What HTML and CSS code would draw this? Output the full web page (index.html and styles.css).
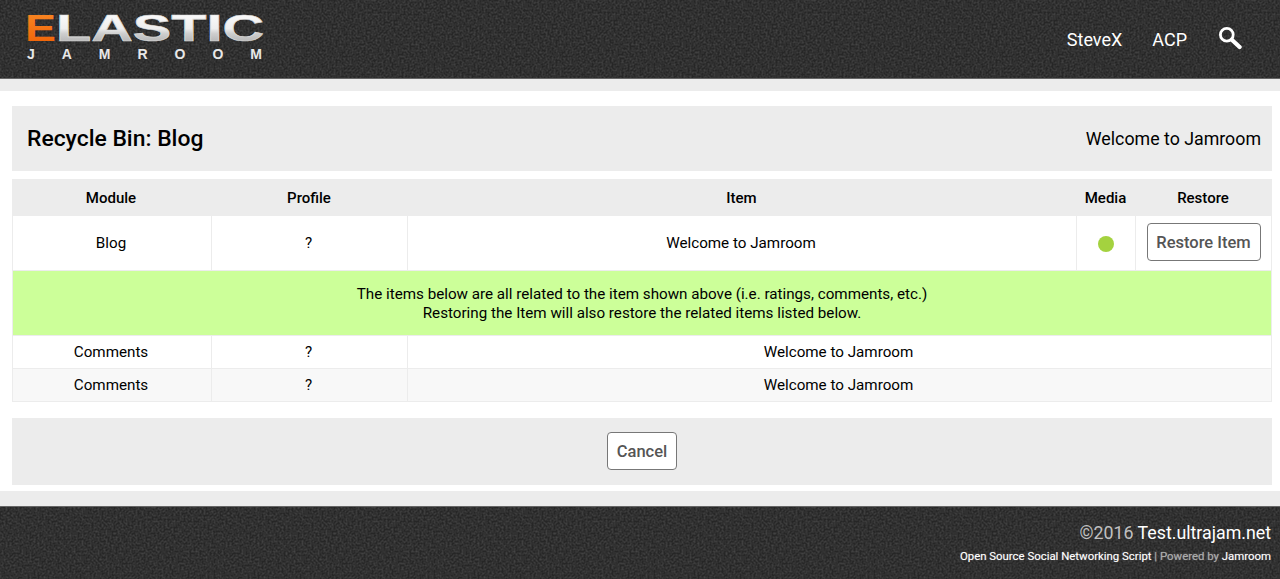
FILE: index.html
```html
<!DOCTYPE html>
<html lang="en">
<head>
<meta charset="utf-8">
<title>Recycle Bin: Blog</title>
<link rel="stylesheet" href="styles.css">
</head>
<body>
<header class="site-header">
  <a class="logo" href="#" aria-label="Elastic Jamroom">
    <svg class="logo-svg" width="250" height="56" viewBox="0 0 250 56">
      <defs>
        <linearGradient id="metal" x1="0" y1="0" x2="0" y2="1">
          <stop offset="0" stop-color="#ffffff"/>
          <stop offset="0.5" stop-color="#eeeeee"/>
          <stop offset="0.62" stop-color="#cfcfcf"/>
          <stop offset="1" stop-color="#a0a0a0"/>
        </linearGradient>
        <linearGradient id="flame" x1="0" y1="0" x2="0" y2="1">
          <stop offset="0" stop-color="#f98a26"/>
          <stop offset="1" stop-color="#ee5f04"/>
        </linearGradient>
      </defs>
      <text class="logo-e" x="1" y="34" fill="url(#flame)" textLength="31" lengthAdjust="spacingAndGlyphs">E</text>
      <text class="logo-main" x="32" y="34" fill="url(#metal)" textLength="208" lengthAdjust="spacingAndGlyphs">LASTIC</text>
      <text class="logo-sub" x="3" y="52" fill="#e8e8e8" textLength="235">JAMROOM</text>
    </svg>
  </a>
  <nav class="main-nav">
    <a href="#">SteveX</a>
    <a href="#">ACP</a>
    <a href="#" class="search" aria-label="Search">
      <svg width="24" height="24" viewBox="0 0 24 24" fill="none" stroke="#fff">
        <circle cx="8.8" cy="8.8" r="6.4" stroke-width="2.8"/>
        <path d="M13.8 13.8 21.6 21" stroke-width="4.2" stroke-linecap="round"/>
      </svg>
    </a>
  </nav>
</header>

<div class="strip"></div>

<main class="content">
  <section class="title-bar">
    <h1>Recycle Bin: Blog</h1>
    <span class="title-item">Welcome to Jamroom</span>
  </section>

  <table class="bin">
    <colgroup>
      <col class="c-module"><col class="c-profile"><col class="c-item"><col class="c-media"><col class="c-restore">
    </colgroup>
    <thead>
      <tr><th>Module</th><th>Profile</th><th>Item</th><th>Media</th><th>Restore</th></tr>
    </thead>
    <tbody>
      <tr class="main-row">
        <td>Blog</td><td>?</td><td>Welcome to Jamroom</td>
        <td class="cell-flush"><span class="dot"></span></td>
        <td class="cell-flush"><button class="btn btn-restore">Restore Item</button></td>
      </tr>
      <tr class="notice">
        <td colspan="5">The items below are all related to the item shown above (i.e. ratings, comments, etc.)<br>Restoring the Item will also restore the related items listed below.</td>
      </tr>
      <tr class="sub-row">
        <td>Comments</td><td>?</td><td colspan="3">Welcome to Jamroom</td>
      </tr>
      <tr class="sub-row alt">
        <td>Comments</td><td>?</td><td colspan="3">Welcome to Jamroom</td>
      </tr>
    </tbody>
  </table>

  <div class="actions"><button class="btn btn-cancel">Cancel</button></div>
</main>

<div class="strip strip-bottom"></div>

<footer class="site-footer">
  <p class="copy">©2016 <a href="#">Test.ultrajam.net</a></p>
  <p class="powered"><a href="#">Open Source Social Networking Script</a> | Powered by <a href="#">Jamroom</a></p>
</footer>
</body>
</html>
```

FILE: styles.css
```css
* { box-sizing: border-box; }

html, body { margin: 0; padding: 0; }

body {
  height: 579px;
  overflow: hidden;
  display: flex;
  flex-direction: column;
  background: #fff;
  color: #000;
  font-family: Roboto, "Liberation Sans", sans-serif;
  font-size: 15px;
}

.site-header,
.site-footer {
  background-color: #262626;
  background-image: url("data:image/svg+xml;utf8,<svg xmlns='http://www.w3.org/2000/svg' width='220' height='220'><filter id='n'><feTurbulence type='fractalNoise' baseFrequency='0.5' numOctaves='2' seed='4'/><feColorMatrix values='0 0 0 0 0.33 0 0 0 0 0.33 0 0 0 0 0.33 0.5 0 0 0 -0.16'/></filter><rect width='220' height='220' filter='url(%23n)'/></svg>");
}

.site-header {
  height: 79px;
  flex: none;
  display: flex;
  align-items: flex-start;
  justify-content: space-between;
  border-bottom: 1px solid #666;
  padding: 7px 39px 0 24px;
}

.logo { display: block; line-height: 0; }

.logo-e, .logo-main {
  font-family: "Liberation Sans", sans-serif;
  font-weight: 700;
  font-size: 37px;
}

.logo-main {
  stroke: #dcdcdc;
  stroke-width: 0.6;
}

.logo-sub {
  font-family: "Liberation Sans", sans-serif;
  font-weight: 700;
  font-size: 14px;
}

.main-nav {
  display: flex;
  align-items: center;
  gap: 30px;
  height: 64px;
  font-size: 18px;
}

.main-nav a { color: #fff; text-decoration: none; }

.search { display: block; height: 24px; margin-top: -3px; margin-left: 1px; margin-right: -1px; }

.strip { height: 12px; flex: none; background: #ececec; }

.strip-bottom { height: 15px; }

.content {
  flex: 1;
  padding: 15px 8px 6px 12px;
  display: flex;
  flex-direction: column;
}

.title-bar {
  height: 65px;
  flex: none;
  display: flex;
  align-items: center;
  justify-content: space-between;
  background: #ececec;
  padding: 0 11px 0 15px;
}

.title-bar h1 {
  margin: 0;
  font-size: 22.9px;
  font-weight: 500;
}

.title-item { font-size: 17.8px; }

.bin {
  width: 1260px;
  margin-top: 8px;
  border-collapse: separate;
  border-spacing: 0;
  table-layout: fixed;
  text-align: center;
  font-size: 15.2px;
  flex: none;
}

.c-module { width: 200px; }
.c-profile { width: 196px; }
.c-item { width: 669px; }
.c-media { width: 59px; }
.c-restore { width: 136px; }

.bin th {
  height: 37px;
  padding: 1px 2px 0 0;
  background: #ececec;
  font-size: 15px;
  font-weight: 500;
}

.bin td {
  padding: 0 2px 0 0;
  border-right: 1px solid #ececec;
  border-bottom: 1px solid #ececec;
}

.bin td:first-child { border-left: 1px solid #ececec; }

.bin td.cell-flush { padding: 0; }

.main-row td { height: 55px; }

.bin .notice td {
  height: 65px;
  padding: 1px 0 0;
  background: #ccff99;
  line-height: 19px;
}

.sub-row td { height: 33px; }

.sub-row.alt td { background: #f8f8f8; }

.dot {
  display: inline-block;
  width: 16px;
  height: 16px;
  border-radius: 50%;
  background: #a4d23f;
  vertical-align: middle;
}

.btn {
  font-family: Roboto, "Liberation Sans", sans-serif;
  font-size: 16.5px;
  font-weight: 500;
  color: #555;
  background: #fff;
  border: 1px solid #777;
  border-radius: 4px;
  height: 38px;
  padding: 0;
  vertical-align: middle;
}

.btn-restore { width: 114px; margin-bottom: 2px; padding-top: 1px; }

.actions {
  height: 67px;
  flex: none;
  margin-top: 16px;
  padding-bottom: 1px;
  display: flex;
  align-items: center;
  justify-content: center;
  background: #ececec;
}

.btn-cancel { width: 70px; }

.site-footer {
  height: 73px;
  flex: none;
  text-align: right;
  padding: 15px 9px 0 0;
  border-top: 1px solid #666;
  color: #c0c0c0;
}

.site-footer p { margin: 0; }

.site-footer a { color: #fff; text-decoration: none; }

.copy { font-size: 17.8px; line-height: 21px; }

.powered {
  font-size: 11.4px;
  line-height: 14px;
  margin-top: 6px !important;
  color: #aaa;
  text-shadow: 0 0 1px rgba(255, 255, 255, 0.45);
}
```
